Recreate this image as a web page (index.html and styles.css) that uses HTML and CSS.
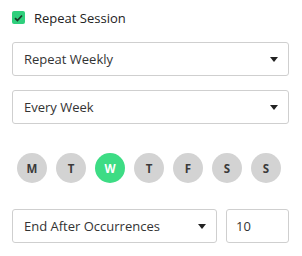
FILE: index.html
```html
<!DOCTYPE html>
<html>
<head>
<meta charset="utf-8">
<link rel="stylesheet" href="styles.css">
</head>
<body>
<div class="panel">
  <label class="check-row">
    <span class="checkbox">
      <svg width="9" height="8" viewBox="0 0 9 8"><path d="M1 4.2 L3.4 6.5 L8 1.5" fill="none" stroke="#1d3b2b" stroke-width="1.8"/></svg>
    </span>
    <span class="check-label">Repeat Session</span>
  </label>
  <div class="select"><span>Repeat Weekly</span><span class="caret"></span></div>
  <div class="select second"><span>Every Week</span><span class="caret"></span></div>
  <div class="days">
    <span class="day">M</span>
    <span class="day">T</span>
    <span class="day active">W</span>
    <span class="day">T</span>
    <span class="day">F</span>
    <span class="day">S</span>
    <span class="day">S</span>
  </div>
  <div class="end-row">
    <div class="select end"><span>End After Occurrences</span><span class="caret"></span></div>
    <div class="count">10</div>
  </div>
</div>
</body>
</html>
```
FILE: styles.css
```css
html, body {
  margin: 0;
  padding: 0;
  background: #fff;
}
body {
  font-family: "Open Sans", "Liberation Sans", sans-serif;
  font-size: 13px;
  color: #333;
}
.panel {
  padding: 10px 13px 0 12px;
  display: flex;
  flex-direction: column;
}
.check-row {
  display: flex;
  align-items: center;
  gap: 9px;
  height: 15px;
}
.checkbox {
  width: 13px;
  height: 13px;
  border-radius: 2px;
  background: #2fcf7c;
  display: flex;
  align-items: center;
  justify-content: center;
}
.check-label {
  font-size: 13px;
  color: #222;
}
.select {
  box-sizing: border-box;
  height: 34px;
  border: 1px solid #cfcfcf;
  border-radius: 3px;
  display: flex;
  align-items: center;
  justify-content: space-between;
  padding: 0 10px 0 11px;
  margin-top: 17px;
}
.select.second {
  margin-top: 14px;
}
.caret {
  width: 0;
  height: 0;
  border-left: 4px solid transparent;
  border-right: 4px solid transparent;
  border-top: 5px solid #222;
}
.days {
  display: flex;
  gap: 9px;
  padding-left: 5px;
  margin-top: 29px;
}
.day {
  width: 30px;
  height: 30px;
  border-radius: 50%;
  background: #d3d3d3;
  color: #3a3a3a;
  font-weight: 700;
  font-size: 11.5px;
  display: flex;
  align-items: center;
  justify-content: center;
}
.day.active {
  background: #3ddc84;
  color: #fff;
}
.end-row {
  display: flex;
  gap: 9px;
  margin-top: 26px;
}
.end-row .select {
  margin-top: 0;
  flex: 1;
}
.count {
  box-sizing: border-box;
  width: 63px;
  height: 34px;
  border: 1px solid #cfcfcf;
  border-radius: 3px;
  display: flex;
  align-items: center;
  padding-left: 9px;
}
```
